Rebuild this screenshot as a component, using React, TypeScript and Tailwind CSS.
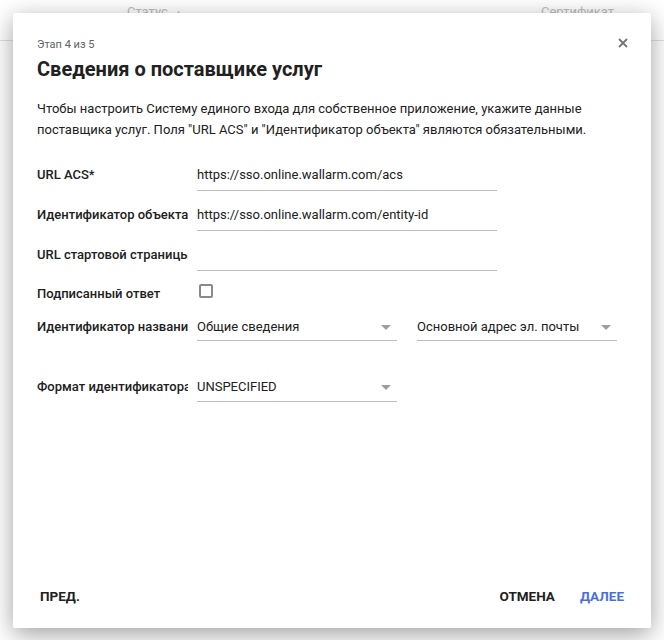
import React from 'react'

const font = { fontFamily: 'Roboto, "Noto Sans", sans-serif' }

function Caret() {
  return (
    <svg width="10" height="5" viewBox="0 0 10 5" className="shrink-0">
      <path d="M0 0h10L5 5z" fill="#9e9e9e" />
    </svg>
  )
}

function Label({ children }: { children: React.ReactNode }) {
  return (
    <div className="w-[160px] shrink-0 pt-[3px] pr-[9px]">
      <div className="overflow-hidden whitespace-nowrap text-[13px] leading-[15px] font-medium text-[#212121]">
        {children}
      </div>
    </div>
  )
}

function TextRow({ label, value, h = 'h-[40px]' }: { label: string; value?: string; h?: string }) {
  return (
    <div className={`flex items-start ${h}`}>
      <Label>{label}</Label>
      <div className="w-[300px] h-[27px] border-b border-[#bdbdbd] text-[13px] leading-[15px] text-[#212121] pt-[3px]">
        {value}
      </div>
    </div>
  )
}

function Select({ value, h }: { value: string; h: string }) {
  return (
    <div className={`w-[200px] ${h} border-b border-[#bdbdbd] flex items-start justify-between pr-[6px] pt-[3px]`}>
      <span className="text-[13px] leading-[15px] text-[#212121]">{value}</span>
      <span className="pt-[6px]">
        <Caret />
      </span>
    </div>
  )
}

export default function App() {
  return (
    <div className="relative w-[664px] h-[640px] bg-white overflow-hidden" style={font}>
      {/* page behind the dialog */}
      <div className="h-[41px] border-b border-[#e0e0e0] relative">
        <span className="absolute left-[127px] top-[2px] text-[13px] text-[#bdbdbd]">
          Статус <span className="text-[9px] ml-[3px]">▲</span>
        </span>
        <span className="absolute left-[541px] top-[2px] text-[13px] text-[#bdbdbd]">Сертификат</span>
      </div>

      {/* modal */}
      <div className="absolute left-[13px] top-[13px] w-[638px] h-[615px] bg-white rounded-[2px] shadow-[0_6px_24px_rgba(0,0,0,0.38)] flex flex-col">
        <div className="relative px-[24px] pt-[25px]">
          <div className="text-[11px] text-[#616161] leading-[14px]">Этап 4 из 5</div>
          <h1 className="mt-[5px] text-[20px] font-bold text-[#212121] leading-[24px]">
            Сведения о поставщике услуг
          </h1>
          <button className="absolute right-[23px] top-[25px] w-[10px] h-[10px] flex items-center justify-center">
            <svg width="10" height="10" viewBox="0 0 10 10">
              <path d="M1 1l8 8M9 1l-8 8" stroke="#757575" strokeWidth="1.8" />
            </svg>
          </button>
        </div>

        <p className="px-[24px] mt-[17px] text-[13px] leading-[21px] text-[#212121]">
          Чтобы настроить Систему единого входа для собственное приложение, укажите данные
          <br />
          поставщика услуг. Поля "URL ACS" и "Идентификатор объекта" являются обязательными.
        </p>

        <div className="px-[24px] mt-[24px] flex flex-col">
          <TextRow label="URL ACS*" value="https://sso.online.wallarm.com/acs" />
          <TextRow label="Идентификатор объекта" value="https://sso.online.wallarm.com/entity-id" />
          <TextRow label="URL стартовой страницы" h="h-[39px]" />
          <div className="flex items-start h-[33px]">
            <div className="w-[160px] shrink-0 pt-[3px] text-[13px] leading-[15px] font-medium text-[#212121]">
              Подписанный ответ
            </div>
            <div className="ml-[2px] mt-[1px] w-[14px] h-[14px] border-2 border-[#8a8a8a] rounded-[2px]" />
          </div>
          <div className="flex items-start h-[60px]">
            <Label>Идентификатор названия</Label>
            <div className="flex gap-[20px]">
              <Select value="Общие сведения" h="h-[25px]" />
              <Select value="Основной адрес эл. почты" h="h-[25px]" />
            </div>
          </div>
          <div className="flex items-start">
            <Label>Формат идентификатора</Label>
            <Select value="UNSPECIFIED" h="h-[26px]" />
          </div>
        </div>

        <div className="mt-auto flex items-center justify-between px-[27px] pb-[22px]">
          <button className="text-[13.5px] font-bold text-[#212121]">ПРЕД.</button>
          <div className="flex gap-[25px]">
            <button className="text-[13.5px] font-bold text-[#212121]">ОТМЕНА</button>
            <button className="text-[13.5px] font-bold text-[#4a6fdc]">ДАЛЕЕ</button>
          </div>
        </div>
      </div>
    </div>
  )
}
